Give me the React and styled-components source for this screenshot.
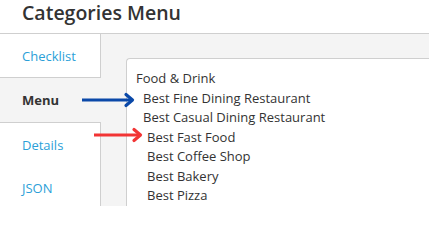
import React from "react";
import styled, { createGlobalStyle } from "styled-components";

const Global = createGlobalStyle`
  html, body { margin: 0; padding: 0; background: #fff; }
  body { font-family: "Open Sans", "Liberation Sans", sans-serif; }
  * { box-sizing: border-box; }
`;

const Page = styled.div`
  width: 429px;
  height: 206px;
  overflow: hidden;
  display: flex;
  flex-direction: column;
  position: relative;
`;

const Header = styled.header`
  height: 34px;
  flex: none;
  border-bottom: 1px solid #cfcfcf;
  padding: 1px 0 0 22px;
  display: flex;
  align-items: flex-start;
`;

const Title = styled.h1`
  margin: 0;
  font-size: 19.5px;
  line-height: 24px;
  font-weight: 600;
  color: #333;
`;

const Body = styled.div`
  flex: 1;
  display: flex;
  background: #f4f4f4;
  min-height: 0;
`;

const TabList = styled.nav`
  width: 101px;
  flex: none;
  display: flex;
  flex-direction: column;
`;

const Tab = styled.div`
  height: 44px;
  flex: none;
  display: flex;
  align-items: center;
  padding-left: 22px;
  font-size: 13px;
  background: ${(p) => (p.$active ? "transparent" : "#fff")};
  color: ${(p) => (p.$active ? "#333" : "#2b9fd8")};
  font-weight: ${(p) => (p.$active ? 700 : 400)};
  border-right: 1px solid ${(p) => (p.$active ? "transparent" : "#cfcfcf")};
  border-bottom: ${(p) => (p.$bottom ? "1px solid #cfcfcf" : "none")};
  border-top: ${(p) => (p.$top ? "1px solid #cfcfcf" : "none")};
`;

const Content = styled.div`
  flex: 1;
  padding: 24px 0 0 25px;
  min-width: 0;
`;

const Panel = styled.div`
  background: #fff;
  border: 1px solid #cfcfcf;
  border-right: none;
  border-bottom: none;
  border-top-left-radius: 4px;
  height: 200px;
  padding: 10px 0 0 9px;
`;

const Item = styled.div`
  font-size: 13px;
  line-height: 19.5px;
  color: #333;
  white-space: nowrap;
  padding-left: ${(p) => p.$indent || 0}px;
`;

const ArrowSvg = styled.svg`
  position: absolute;
  left: ${(p) => p.$x}px;
  top: ${(p) => p.$y}px;
  overflow: visible;
`;

function Arrow({ x, y, length, color }) {
  return (
    <ArrowSvg $x={x} $y={y - 7} width={length} height={14} viewBox={`0 0 ${length} 14`}>
      <line x1="0" y1="7" x2={length - 2} y2="7" stroke={color} strokeWidth="3.2" />
      <polyline
        points={`${length - 8},1.5 ${length - 1.5},7 ${length - 8},12.5`}
        fill="none"
        stroke={color}
        strokeWidth="3.2"
        strokeLinecap="round"
        strokeLinejoin="round"
      />
    </ArrowSvg>
  );
}

const items = [
  { t: "Food & Drink", i: 0 },
  { t: "Best Fine Dining Restaurant", i: 7 },
  { t: "Best Casual Dining Restaurant", i: 7 },
  { t: "Best Fast Food", i: 11 },
  { t: "Best Coffee Shop", i: 11 },
  { t: "Best Bakery", i: 11 },
  { t: "Best Pizza", i: 11 },
];

export default function App() {
  return (
    <>
      <Global />
      <Page>
        <Header>
          <Title>Categories Menu</Title>
        </Header>
        <Body>
          <TabList>
            <Tab $bottom>Checklist</Tab>
            <Tab $active>Menu</Tab>
            <Tab $top>Details</Tab>
            <Tab>JSON</Tab>
          </TabList>
          <Content>
            <Panel>
              {items.map((it) => (
                <Item key={it.t} $indent={it.i}>
                  {it.t}
                </Item>
              ))}
            </Panel>
          </Content>
        </Body>
        <Arrow x={82} y={100} length={52} color="#0a48a8" />
        <Arrow x={94} y={135} length={48} color="#f23434" />
      </Page>
    </>
  );
}
